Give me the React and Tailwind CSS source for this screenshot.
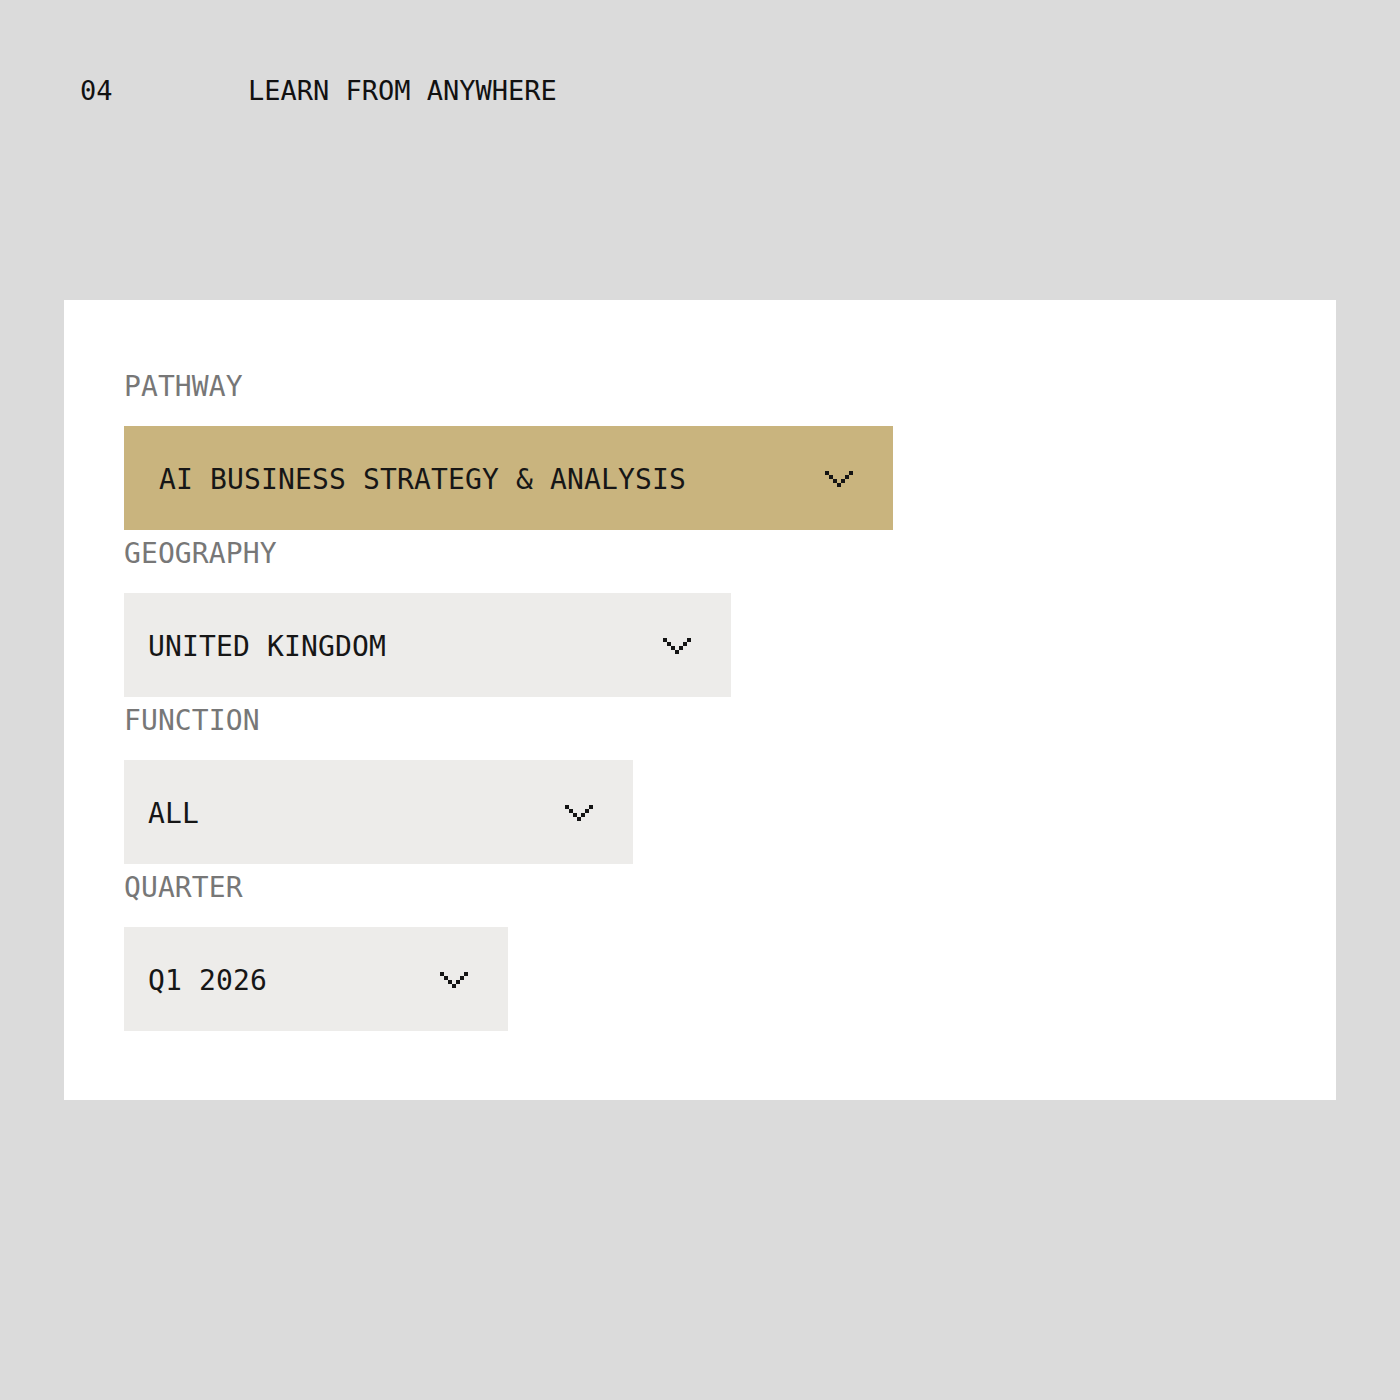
import React from "react";

const mono = { fontFamily: '"DejaVu Sans Mono", "Liberation Mono", monospace' };

function Chevron() {
  const pts = [
    [0, 0],
    [1, 1],
    [2, 2],
    [3, 3],
    [4, 2],
    [5, 1],
    [6, 0],
  ];
  return (
    <svg width="28" height="16" viewBox="0 0 28 16" shapeRendering="crispEdges" className="shrink-0 mt-[2px]">
      {pts.map(([x, y], i) => (
        <rect key={i} x={x * 4} y={y * 4} width="4" height="4" fill="#141414" />
      ))}
    </svg>
  );
}

function Field({ label, value, width, bg, padL }) {
  return (
    <div className="flex flex-col">
      <div className="h-[28px] leading-[28px] text-[28px] text-[#777777] mb-[25px] tracking-[0.1px]" style={mono}>
        {label}
      </div>
      <div className={`h-[104px] flex items-center justify-between pr-[40px] ${bg} ${width} ${padL}`}>
        <span className="text-[28px] leading-none text-[#161616] tracking-[0.14px] whitespace-pre pt-[3px]" style={mono}>
          {value}
        </span>
        <Chevron />
      </div>
    </div>
  );
}

export default function App() {
  return (
    <div className="w-[1400px] h-[1400px] bg-[#dbdbdb] pt-[77px]">
      <div className="flex items-start h-[27px] text-[27px] leading-none text-[#111111]" style={mono}>
        <span className="ml-[80px] w-[168px]">04</span>
        <span>LEARN FROM ANYWHERE</span>
      </div>
      <div className="mt-[196px] mx-[64px] bg-white pt-[73px] pb-[69px] pl-[60px] flex flex-col gap-[10px]">
        <Field label="PATHWAY" value="AI BUSINESS STRATEGY & ANALYSIS" width="w-[769px]" bg="bg-[#c9b47e]" padL="pl-[35px]" />
        <Field label="GEOGRAPHY" value="UNITED KINGDOM" width="w-[607px]" bg="bg-[#edecea]" padL="pl-[24px]" />
        <Field label="FUNCTION" value="ALL" width="w-[509px]" bg="bg-[#edecea]" padL="pl-[24px]" />
        <Field label="QUARTER" value="Q1 2026" width="w-[384px]" bg="bg-[#edecea]" padL="pl-[24px]" />
      </div>
    </div>
  );
}
